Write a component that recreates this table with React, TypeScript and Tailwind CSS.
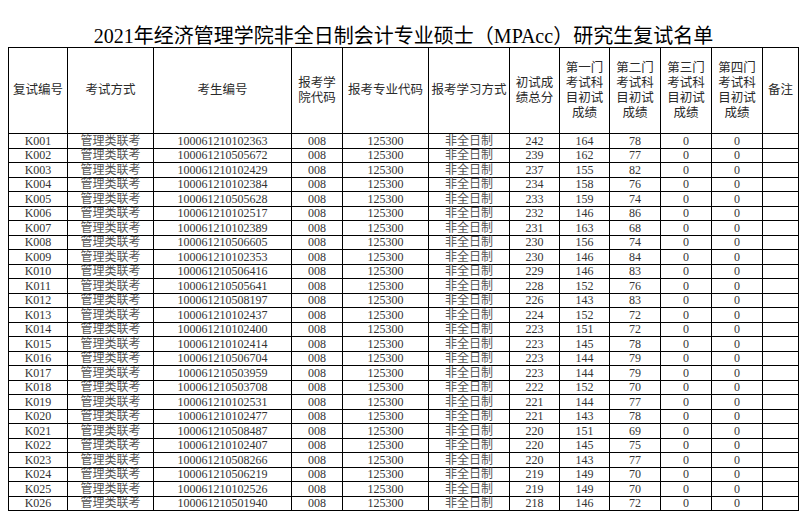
import React from 'react';

type Row = [string, string, number, number, number];

const rows: Row[] = [
  ['K001', '100061210102363', 242, 164, 78],
  ['K002', '100061210505672', 239, 162, 77],
  ['K003', '100061210102429', 237, 155, 82],
  ['K004', '100061210102384', 234, 158, 76],
  ['K005', '100061210505628', 233, 159, 74],
  ['K006', '100061210102517', 232, 146, 86],
  ['K007', '100061210102389', 231, 163, 68],
  ['K008', '100061210506605', 230, 156, 74],
  ['K009', '100061210102353', 230, 146, 84],
  ['K010', '100061210506416', 229, 146, 83],
  ['K011', '100061210505641', 228, 152, 76],
  ['K012', '100061210508197', 226, 143, 83],
  ['K013', '100061210102437', 224, 152, 72],
  ['K014', '100061210102400', 223, 151, 72],
  ['K015', '100061210102414', 223, 145, 78],
  ['K016', '100061210506704', 223, 144, 79],
  ['K017', '100061210503959', 223, 144, 79],
  ['K018', '100061210503708', 222, 152, 70],
  ['K019', '100061210102531', 221, 144, 77],
  ['K020', '100061210102477', 221, 143, 78],
  ['K021', '100061210508487', 220, 151, 69],
  ['K022', '100061210102407', 220, 145, 75],
  ['K023', '100061210508266', 220, 143, 77],
  ['K024', '100061210506219', 219, 149, 70],
  ['K025', '100061210102526', 219, 149, 70],
  ['K026', '100061210501940', 218, 146, 72],
];

const colWidths = [59, 86, 138, 51, 86, 81, 50, 50, 51, 51, 51, 36];

const headers: string[][] = [
  ['复试编号'],
  ['考试方式'],
  ['考生编号'],
  ['报考学', '院代码'],
  ['报考专业代码'],
  ['报考学习方式'],
  ['初试成', '绩总分'],
  ['第一门', '考试科', '目初试', '成绩'],
  ['第二门', '考试科', '目初试', '成绩'],
  ['第三门', '考试科', '目初试', '成绩'],
  ['第四门', '考试科', '目初试', '成绩'],
  ['备注'],
];

const font = { fontFamily: '"Liberation Serif", "Noto Sans CJK SC", serif' };

export default function App() {
  return (
    <div className="w-[802px] h-[512px] bg-white overflow-hidden pl-2" style={font}>
      <div className="w-[791px] h-[47px] flex items-end justify-center">
        <h1 className="text-[20px] leading-[22px] text-black">
          2021年经济管理学院非全日制会计专业硕士（MPAcc）研究生复试名单
        </h1>
      </div>
      <table className="table-fixed border-collapse w-[791px] text-[#333]">
        <colgroup>
          {colWidths.map((w, i) => (
            <col key={i} style={{ width: w }} />
          ))}
        </colgroup>
        <thead>
          <tr className="h-[86px]">
            {headers.map((lines, i) => (
              <th
                key={i}
                className="border border-black font-normal text-[12.5px] leading-[15px] text-center align-middle p-0 text-[#2a2a2a]"
              >
                {lines.map((l, j) => (
                  <div key={j}>{l}</div>
                ))}
              </th>
            ))}
          </tr>
        </thead>
        <tbody>
          {rows.map(([id, no, total, s1, s2]) => (
            <tr key={id} className="h-[14.5px]">
              <td className="border border-black text-[12px] leading-[13px] text-center align-bottom p-0">{id}</td>
              <td className="border border-black text-[12px] leading-[13px] text-center align-bottom p-0 text-[#555]">管理类联考</td>
              <td className="border border-black text-[12px] leading-[13px] text-center align-bottom p-0">{no}</td>
              <td className="border border-black text-[12px] leading-[13px] text-center align-bottom p-0">008</td>
              <td className="border border-black text-[12px] leading-[13px] text-center align-bottom p-0">125300</td>
              <td className="border border-black text-[12px] leading-[13px] text-center align-bottom p-0 text-[#555]">非全日制</td>
              <td className="border border-black text-[12px] leading-[13px] text-center align-bottom p-0">{total}</td>
              <td className="border border-black text-[12px] leading-[13px] text-center align-bottom p-0">{s1}</td>
              <td className="border border-black text-[12px] leading-[13px] text-center align-bottom p-0">{s2}</td>
              <td className="border border-black text-[12px] leading-[13px] text-center align-bottom p-0">0</td>
              <td className="border border-black text-[12px] leading-[13px] text-center align-bottom p-0">0</td>
              <td className="border border-black text-[12px] leading-[13px] text-center align-bottom p-0"></td>
            </tr>
          ))}
        </tbody>
      </table>
    </div>
  );
}
